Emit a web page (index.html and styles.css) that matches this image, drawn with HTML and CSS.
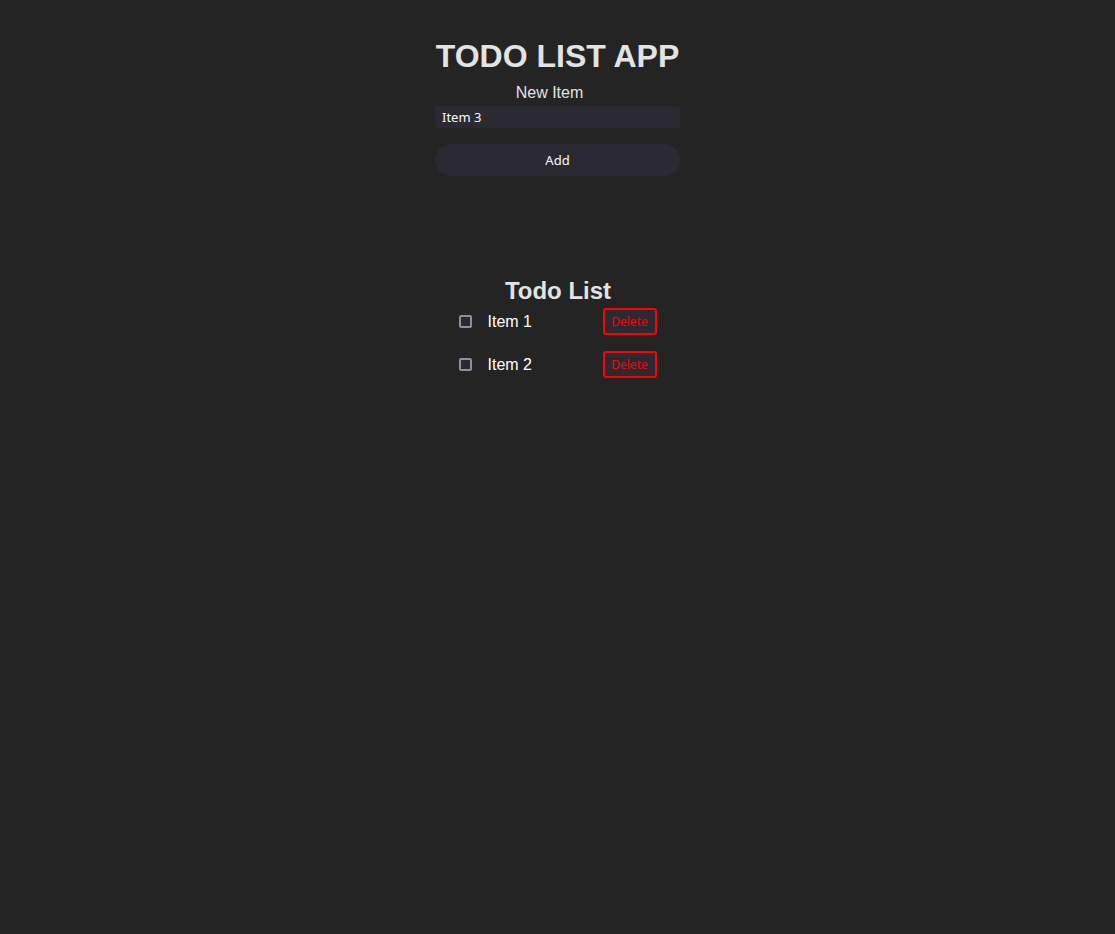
FILE: index.html
```html
<!DOCTYPE html>
<html>
<head>
<meta charset="utf-8">
<link rel="stylesheet" href="styles.css">
</head>
<body>
<main class="app">
  <section class="form">
    <h1 class="title">TODO LIST APP</h1>
    <label class="label" for="item">New Item</label>
    <input class="input" id="item" type="text" value="Item 3">
    <button class="add">Add</button>
  </section>
  <section class="list">
    <h2 class="list-title">Todo List</h2>
    <ul class="items">
      <li class="row">
        <input class="check" type="checkbox">
        <span class="text">Item 1</span>
        <button class="delete">Delete</button>
      </li>
      <li class="row">
        <input class="check" type="checkbox">
        <span class="text">Item 2</span>
        <button class="delete">Delete</button>
      </li>
    </ul>
  </section>
</main>
</body>
</html>
```
FILE: styles.css
```css
html, body {
  margin: 0;
  padding: 0;
  background: #242424;
}
body {
  font-family: "Liberation Sans", Arial, sans-serif;
  color: rgba(255, 255, 255, 0.87);
}
.app {
  display: flex;
  flex-direction: column;
  align-items: center;
}
.form {
  width: 245px;
  display: flex;
  flex-direction: column;
  align-items: stretch;
  margin-top: 38px;
}
.title {
  margin: 0;
  font-size: 32px;
  font-weight: bold;
  text-align: center;
  color: #e3e3e3;
  line-height: 37px;
  white-space: nowrap;
}
.label {
  display: block;
  text-align: center;
  font-size: 16px;
  line-height: 18px;
  margin-top: 9px;
  padding-right: 16px;
  color: #e3e3e3;
}
.input {
  box-sizing: border-box;
  margin-top: 4px;
  height: 22px;
  width: 100%;
  border: none;
  border-radius: 3px;
  background: #2b2a33;
  color: #fbfbfe;
  font-family: "Noto Sans", "Open Sans", sans-serif;
  font-size: 13px;
  padding: 0 7px;
  outline: none;
}
.add {
  margin-top: 16px;
  height: 32px;
  width: 100%;
  border: none;
  border-radius: 16px;
  background: #2b2a33;
  color: #fbfbfe;
  font-family: "Noto Sans", "Open Sans", sans-serif;
  font-size: 13px;
}
.list {
  margin-top: 101px;
  display: flex;
  flex-direction: column;
  align-items: center;
}
.list-title {
  margin: 0;
  font-size: 24px;
  font-weight: bold;
  line-height: 28px;
  color: #e3e3e3;
  margin-left: 1px;
}
.items {
  list-style: none;
  margin: 3px 0 0 0;
  padding: 0;
  width: 206px;
  display: flex;
  flex-direction: column;
  gap: 16px;
}
.row {
  display: flex;
  align-items: center;
  height: 27px;
}
.check {
  appearance: none;
  -webkit-appearance: none;
  box-sizing: border-box;
  width: 13px;
  height: 13px;
  margin: 0 1px 0 4px;
  border: 2px solid #8f8f9d;
  border-radius: 2px;
  background: #2b2a33;
}
.text {
  margin-left: 15px;
  font-size: 16px;
  color: #ffffff;
  flex: 1;
}
.delete {
  box-sizing: border-box;
  height: 27px;
  width: 54px;
  margin-right: 4px;
  padding: 0;
  border: 2px solid #ff0000;
  border-radius: 3px;
  background: #2b2a33;
  color: #ff0000;
  font-family: "Noto Sans", "Open Sans", sans-serif;
  font-size: 12px;
}
```
